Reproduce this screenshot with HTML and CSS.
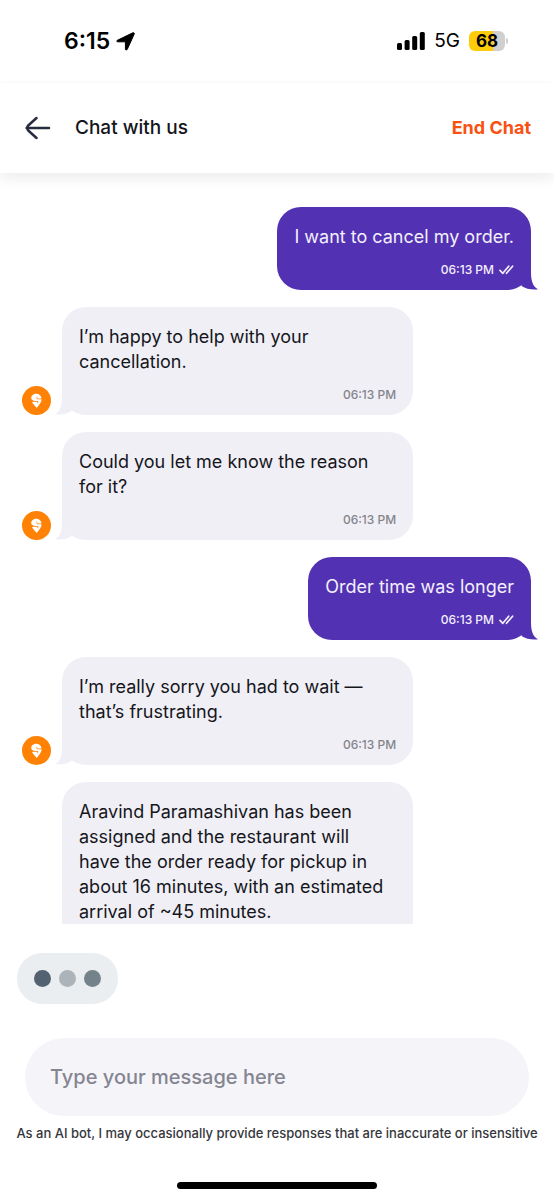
FILE: index.html
```
<!DOCTYPE html>
<html lang="en">
<head>
<meta charset="utf-8">
<meta name="viewport" content="width=device-width, initial-scale=1">
<title>Chat with us</title>
<link rel="stylesheet" href="styles.css">
</head>
<body>
<svg class="defs" aria-hidden="true">
  <symbol id="ticks" viewBox="0 0 15 10">
    <path d="M1 5.4 3.800 8.300 9.700 1.200M7.500 8.300 13.600 1.200" fill="none" stroke="currentColor" stroke-width="1.700" stroke-linecap="round" stroke-linejoin="round"/>
  </symbol>
  <symbol id="tail" viewBox="0 0 17 24">
    <path d="M10 0V6C10 14 11.500 20.500 17 23.300C11 24 5 23 0.500 20L0 12Z" fill="currentColor"/>
  </symbol>
  <symbol id="brand" viewBox="0 0 29 29">
    <circle cx="14.500" cy="14.500" r="14.500" fill="#ff8205"/>
    <path d="M14.700 22C12.800 19.600 10.600 17.600 10.200 16.200c0-.4.7-.5 1.500-.5h3.300c.5 0 .5.3.5.700v.8h.7v-1.700c0-.5-.2-.6-.8-.6h-2.100c-2.300 0-4.100-.9-4.100-2.800 0-2.600 2.400-4.400 5.100-4.400 2.600 0 4.900 1.700 5.100 4.200 0 .4-.3.600-.9.600h-2.900c-.3 0-.4-.2-.4-.5V10.600h-.6v2c0 .4.300.6.8.6h3.300c.8 0 1 .3.900.9-.4 2.500-2.900 5.500-4.900 7.900Z" fill="#fff"/>
  </symbol>
</svg>
<div class="app">
  <div class="status">
    <div class="status-group">
      <span class="clock">6:15</span>
      <svg class="location" viewBox="0 0 19 19" aria-hidden="true"><path d="M1.400 8.300 16.800.8c1-.4 1.800.3 1.400 1.300L11.300 17.300c-.5 1.100-1.900.9-1.900-.3V9.800H1.900C.6 9.800.3 8.800 1.400 8.300Z" stroke="#000" stroke-width="1"/></svg>
    </div>
    <div class="status-group status-right">
      <svg class="signal" viewBox="0 0 28 18" aria-hidden="true"><rect y="11" width="5" height="7" rx="1.500"/><rect x="7.600" y="8" width="5" height="10" rx="1.500"/><rect x="15.200" y="4" width="5" height="14" rx="1.500"/><rect x="22.800" width="5" height="18" rx="1.500"/></svg>
      <span class="network">5G</span>
      <span class="battery">68</span>
    </div>
  </div>
  <header class="header">
    <button class="back" type="button" aria-label="Back">
      <svg viewBox="0 0 26 24" aria-hidden="true"><path d="M24 12H1.600M11.500 2 3.500 9.200Q1 12 3.500 14.800L11.500 22"/></svg>
    </button>
    <h1 class="title">Chat with us</h1>
    <button class="end" type="button">End Chat</button>
  </header>
  <main class="messages">
    <div class="row row-out">
      <div class="bubble out"><p>I want to cancel my order.</p><div class="meta"><time>06:13 PM</time><svg class="ticks" role="img" aria-label="Read"><use href="#ticks"/></svg></div><svg class="tail" aria-hidden="true"><use href="#tail"/></svg></div>
    </div>
    <div class="row">
      <svg class="avatar" aria-hidden="true"><use href="#brand"/></svg>
      <div class="bubble in"><p>I’m happy to help with your cancellation.</p><div class="meta"><time>06:13 PM</time></div><svg class="tail" aria-hidden="true"><use href="#tail"/></svg></div>
    </div>
    <div class="row">
      <svg class="avatar" aria-hidden="true"><use href="#brand"/></svg>
      <div class="bubble in"><p>Could you let me know the reason for it?</p><div class="meta"><time>06:13 PM</time></div><svg class="tail" aria-hidden="true"><use href="#tail"/></svg></div>
    </div>
    <div class="row row-out">
      <div class="bubble out"><p>Order time was longer</p><div class="meta"><time>06:13 PM</time><svg class="ticks" role="img" aria-label="Read"><use href="#ticks"/></svg></div><svg class="tail" aria-hidden="true"><use href="#tail"/></svg></div>
    </div>
    <div class="row">
      <svg class="avatar" aria-hidden="true"><use href="#brand"/></svg>
      <div class="bubble in"><p>I’m really sorry you had to wait — that’s frustrating.</p><div class="meta"><time>06:13 PM</time></div><svg class="tail" aria-hidden="true"><use href="#tail"/></svg></div>
    </div>
    <div class="row">
      <svg class="avatar" aria-hidden="true"><use href="#brand"/></svg>
      <div class="bubble in"><p>Aravind Paramashivan has been assigned and the restaurant will have the order ready for pickup in about 16 minutes, with an estimated arrival of ~45 minutes.</p><div class="meta"></div><svg class="tail" aria-hidden="true"><use href="#tail"/></svg></div>
    </div>
  </main>
  <div class="typing" role="status" aria-label="Typing"><span class="dot dark"></span><span class="dot light"></span><span class="dot mid"></span></div>
  <footer class="composer">
    <input class="field" type="text" aria-label="Message" placeholder="Type your message here">
    <p class="notice">As an AI bot, I may occasionally provide responses that are inaccurate or insensitive</p>
    <div class="home"></div>
  </footer>
</div>
</body>
</html>
```
FILE: styles.css
```
* { box-sizing: border-box; }
body { margin: 0; background: #fff; color: #15161c; font-family: Inter, "Liberation Sans", sans-serif; }
p, h1 { margin: 0; }
button { border: 0; padding: 0; background: none; font: inherit; cursor: pointer; }
.defs { position: absolute; width: 0; height: 0; }
.app { display: flex; flex-direction: column; height: 100vh; }

.status { display: flex; justify-content: space-between; align-items: center; height: 83px; padding: 0 49px 0 64px; color: #000; flex: none; border-bottom: 1px solid #fcfcfc; }
.status-group { display: flex; align-items: center; gap: 6px; }
.clock { font-size: 23px; font-weight: 600; line-height: 28px; }
.location { width: 19px; height: 19px; }
.status-right { gap: 9px; }
.signal { width: 28px; height: 18px; }
.network { font-size: 19px; line-height: 24px; }
.battery { position: relative; width: 36px; height: 20px; border-radius: 6px; background: linear-gradient(90deg, #fccc0a 68%, #d0d0d0 68%); font-size: 17px; font-weight: 700; line-height: 20px; text-align: center; }
.battery::after { content: ""; position: absolute; left: 37px; top: 7px; width: 2px; height: 6px; border-radius: 0 2px 2px 0; background: #d0d0d0; }

.header { position: relative; z-index: 1; display: flex; align-items: center; flex: none; height: 90px; padding: 0 23px 0 25px; background: #fff; box-shadow: 0 6px 12px rgba(40, 44, 63, .08); }
.back { display: flex; }
.back svg { width: 26px; height: 24px; fill: none; stroke: #282c3f; stroke-width: 2.5; stroke-linecap: round; stroke-linejoin: round; }
.title { flex: 1; margin-left: 24px; font-size: 19px; font-weight: 500; line-height: 24px; }
.end { color: #fa5110; font-size: 18px; font-weight: 700; line-height: 24px; }

.messages { flex: 1 1 0; min-height: 0; overflow-y: auto; scrollbar-width: none; padding: 34px 23px 0 22px; display: flex; flex-direction: column; gap: 17px; }
.row { display: flex; flex: none; align-items: flex-end; gap: 11px; }
.row-out { justify-content: flex-end; }
.avatar { flex: none; width: 29px; height: 29px; }
.bubble { position: relative; padding: 17px 17px 12px; border-radius: 24px; font-size: 18px; line-height: 25px; }
.in { width: 69%; background: #f0eff5; }
.in p { padding-right: 8px; }
.out { background: #5232b3; color: #f4effc; }
.meta { display: flex; justify-content: flex-end; align-items: center; gap: 5px; min-height: 16px; margin-top: 13px; font-size: 12px; font-weight: 500; line-height: 16px; }
.in .meta { color: #84848d; }
.ticks { width: 15px; height: 10px; }
.tail { position: absolute; bottom: 0; width: 17px; height: 24px; }
.out .tail { right: -7px; color: #5232b3; }
.in .tail { left: -7px; color: #f0eff5; transform: scaleX(-1); }

.typing { display: flex; flex: none; align-self: flex-start; gap: 8px; margin: 29px 17px 34px; padding: 17px; border-radius: 25px; background: #ebeef1; }
.dot { width: 17px; height: 17px; border-radius: 50%; }
.dark { background: #536270; }
.light { background: #acb3b9; }
.mid { background: #748289; }

.composer { display: flex; flex-direction: column; flex: none; }
.field { margin: 0 25px; height: 78px; padding: 0 25px; border: 0; border-radius: 39px; background: #f4f4f9; color: #15161c; font-family: inherit; font-size: 20px; font-weight: 500; }
.field::placeholder { color: #858591; opacity: 1; }
.notice { margin: 8px 8px 0; color: #35363c; font-size: 13px; font-weight: 500; line-height: 18px; text-align: center; }
.home { align-self: center; width: 36%; height: 7px; margin: 40px 0 11px; border-radius: 4px; background: #000; }
```
